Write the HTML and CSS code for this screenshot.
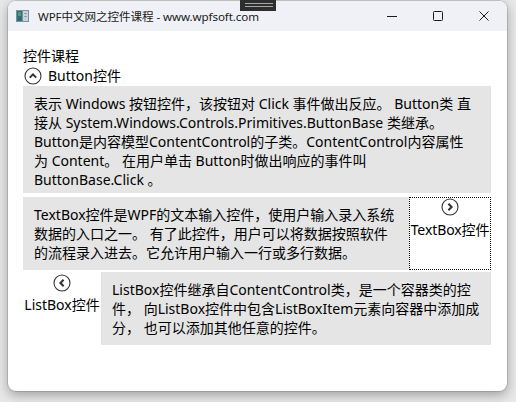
FILE: index.html
```html
<!DOCTYPE html>
<html lang="zh-CN">
<head>
<meta charset="utf-8">
<title>WPF中文网之控件课程</title>
<link rel="stylesheet" href="styles.css">
</head>
<body>
<div class="snap-bar"><span></span><span></span></div>
<div class="window">
  <div class="titlebar">
    <svg class="app-icon" viewBox="0 0 13 12" width="13" height="12">
      <rect x="0" y="0" width="13" height="12" fill="#7d8fa3"/>
      <rect x="1" y="1" width="5" height="10" fill="#2f6f73"/>
      <rect x="2" y="2" width="3" height="4" fill="#4f9a7a"/>
      <rect x="7" y="1" width="5" height="10" fill="#c8d2dc"/>
      <rect x="8" y="3" width="3" height="1" fill="#8f9fb0"/>
      <rect x="8" y="6" width="3" height="1" fill="#8f9fb0"/>
    </svg>
    <span class="title">WPF中文网之控件课程 - www.wpfsoft.com</span>
    <div class="caption-buttons">
      <div class="cap">
        <svg viewBox="0 0 12 12" width="12" height="12"><path d="M1 6.5H11" stroke="#1a1a1a" stroke-width="1" fill="none"/></svg>
      </div>
      <div class="cap">
        <svg viewBox="0 0 12 12" width="12" height="12"><rect x="1.5" y="1.5" width="9" height="9" rx="1" stroke="#1a1a1a" stroke-width="1" fill="none"/></svg>
      </div>
      <div class="cap">
        <svg viewBox="0 0 12 12" width="12" height="12"><path d="M1.5 1.5L10.5 10.5M10.5 1.5L1.5 10.5" stroke="#1a1a1a" stroke-width="1" fill="none"/></svg>
      </div>
    </div>
  </div>
  <div class="content">
    <div class="heading">控件课程</div>

    <div class="expander">
      <div class="top-header">
        <svg class="toggle" viewBox="0 0 18 18" width="18" height="18">
          <circle cx="9" cy="9" r="8" fill="#fff" stroke="#333" stroke-width="1.1"/>
          <path d="M5.8 10.6L9 7.4L12.2 10.6" fill="none" stroke="#333" stroke-width="2"/>
        </svg>
        <span class="header-text">Button控件</span>
      </div>
      <div class="body body-top">表示 Windows 按钮控件，该按钮对 Click 事件做出反应。 Button类 直<br>接从 System.Windows.Controls.Primitives.ButtonBase 类继承。<br>Button是内容模型ContentControl的子类。ContentControl内容属性<br>为 Content。 在用户单击 Button时做出响应的事件叫<br>ButtonBase.Click 。</div>
    </div>

    <div class="expander row row-textbox">
      <div class="body body-side">TextBox控件是WPF的文本输入控件，使用户输入录入系统<br>数据的入口之一。 有了此控件，用户可以将数据按照软件<br>的流程录入进去。它允许用户输入一行或多行数据。</div>
      <div class="side-header focused">
        <svg class="toggle" viewBox="0 0 18 18" width="18" height="18">
          <circle cx="9" cy="9" r="8" fill="#fff" stroke="#333" stroke-width="1.1"/>
          <path d="M7.4 5.8L10.6 9L7.4 12.2" fill="none" stroke="#333" stroke-width="2"/>
        </svg>
        <span class="side-text side-text-tb">TextBox控件</span>
      </div>
    </div>

    <div class="expander row row-listbox">
      <div class="side-header left">
        <svg class="toggle" viewBox="0 0 18 18" width="18" height="18">
          <circle cx="9" cy="9" r="8" fill="#fff" stroke="#333" stroke-width="1.1"/>
          <path d="M10.6 5.8L7.4 9L10.6 12.2" fill="none" stroke="#333" stroke-width="2"/>
        </svg>
        <span class="side-text side-text-lb">ListBox控件</span>
      </div>
      <div class="body body-side">ListBox控件继承自ContentControl类，是一个容器类的控<br>件， 向ListBox控件中包含ListBoxItem元素向容器中添加成<br>分， 也可以添加其他任意的控件。</div>
    </div>
  </div>
</div>
</body>
</html>
```

FILE: styles.css
```css
* {
  box-sizing: border-box;
}

html,
body {
  margin: 0;
  padding: 0;
}

body {
  width: 516px;
  height: 402px;
  overflow: hidden;
  position: relative;
  background: #e8e8e8;
  font-family: "Noto Sans", "Noto Sans CJK SC", sans-serif;
  color: #000;
}

.snap-bar {
  position: absolute;
  left: 240px;
  top: 0;
  width: 36px;
  height: 11px;
  background: #2e2e2e;
  z-index: 5;
  display: flex;
  flex-direction: column;
  align-items: flex-end;
  padding: 3px 3px 0 0;
  gap: 2px;
}

.snap-bar span {
  display: block;
  width: 28px;
  height: 1px;
  background: #a8a8a8;
}

.window {
  margin: 1px 0 0 8px;
  width: 499px;
  height: 390px;
  background: #fff;
  border-radius: 8px;
  overflow: hidden;
  box-shadow: 0 0 0 1px rgba(0, 0, 0, 0.12), 0 4px 12px rgba(0, 0, 0, 0.32);
}

.titlebar {
  height: 30px;
  display: flex;
  align-items: center;
  background: #eff1f6;
}

.app-icon {
  margin-left: 8px;
  flex: none;
}

.title {
  flex: 1;
  margin-left: 9px;
  font-size: 11.6px;
  letter-spacing: -0.1px;
  color: #1a1a1a;
  white-space: nowrap;
}

.caption-buttons {
  display: flex;
  height: 100%;
}

.cap {
  width: 46px;
  height: 30px;
  display: flex;
  align-items: center;
  justify-content: center;
}

.content {
  padding: 15px 16px 0 15px;
}

.heading {
  font-size: 14px;
  line-height: 19px;
}

.top-header {
  height: 21px;
  display: flex;
  align-items: center;
  padding-left: 1px;
}

.toggle {
  display: block;
  flex: none;
}

.header-text {
  margin-left: 6px;
  font-size: 14px;
  line-height: 19px;
}

.body {
  background: #e5e5e5;
  font-size: 14px;
  line-height: 19px;
  white-space: nowrap;
}

.body-top {
  padding: 8px 10px 4px 11px;
}

.row {
  display: flex;
}

.row-textbox {
  margin-top: 4px;
  height: 73px;
}

.row-listbox {
  margin-top: 2px;
  height: 73px;
}

.body-side {
  flex: 1;
  padding: 8px 10px 8px 11px;
  overflow: hidden;
}

.side-header {
  flex: none;
  display: flex;
  flex-direction: column;
  align-items: center;
  background: #fff;
}

.side-header.focused {
  width: 82px;
  border: 1px dotted #000;
}

.side-header.left {
  width: 78px;
  padding-top: 2px;
}

.side-text {
  font-size: 14px;
  line-height: 19px;
  white-space: nowrap;
}

.side-text-tb {
  margin-top: 4px;
  letter-spacing: -0.1px;
}

.side-text-lb {
  margin-top: 3px;
}
```
